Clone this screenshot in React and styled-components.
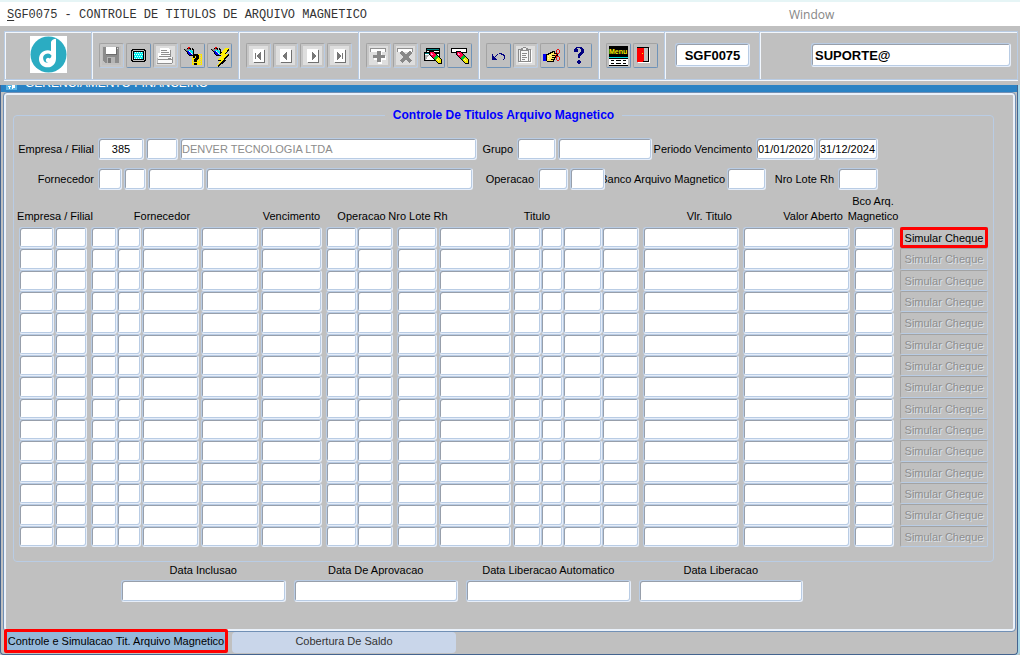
import styled, { createGlobalStyle, css } from "styled-components";

const GlobalStyle = createGlobalStyle`
  *{
    box-sizing: border-box;
  }
  body{
    margin: 0;
    background: #c0c0c0;
    font-family: "Liberation Sans", Arial, sans-serif;
    font-size: 11px;
    color: #000;
  }
  input, button{
    font-family: inherit;
    font-size: inherit;
  }
`;

const Screen = styled.div`
  min-height: 100vh;
  display: flex;
  flex-direction: column;
`;

const MenuBar = styled.header`
  height: 26px;
  flex: none;
  display: grid;
  grid-template-columns: 789fr 231fr;
  align-items: center;
  background: #fff;
  border-top: 2px solid #e6f5f6;
  padding-top: 2px;
`;

const ScreenTitle = styled.h1`
  margin: 0;
  padding-left: 7px;
  font: 12px "Liberation Mono", monospace;
  color: #333;
  u{
    text-underline-offset: 2px;
  }
`;

const MenuItem = styled.button`
  justify-self: start;
  padding: 0;
  border: 0;
  background: none;
  font-family: "Open Sans", sans-serif;
  font-size: 12px;
  line-height: 16px;
  color: #868686;
`;

const Toolbar = styled.div`
  display: flex;
  flex: none;
  height: 49px;
  margin: 5px 2px 5px 4px;
  border: 1px solid #b9cce4;
  box-shadow: inset 1px 1px #f2f7fd, 0 1px #f2f7fd;
`;

const ToolGroup = styled.div`
  display: flex;
  align-items: center;
  justify-content: ${({ $align }) => $align || "flex-start"};
  gap: 2px;
  padding: 0 6px 1px 7px;
  border-right: 1px solid #b9cce4;
  box-shadow: 1px 0 #f2f7fd;
  ${({ $width }) => $width && `width: ${$width}px;`}
  ${({ $grow }) =>
    $grow &&
    css`
      flex: 1;
      border-right: 0;
      box-shadow: none;
    `}
`;

const ToolButton = styled.button`
  width: 25px;
  height: 25px;
  padding: 0;
  border: 1px solid;
  border-color: #a3a3a3 #6f93b8 #6f93b8 #a3a3a3;
  border-radius: 2px;
  background: #c0c0c0;
  svg{
    display: block;
    shape-rendering: crispEdges;
  }
  &:disabled{
    border-color: #a3a3a3 #b9cce4 #b9cce4 #a3a3a3;
    background: ${({ $face }) => $face || "#c0c0c0"};
    box-shadow: inset 0 0 0 2px #c6c6c6;
  }
`;

const inset = css`
  border: 1px solid;
  border-color: #b9cce4 #e6eefa #e6eefa #b9cce4;
  border-radius: 3px;
  background: #fff;
  box-shadow: inset 1px 1px #979fab, inset -1px -1px #b9cce4;
`;

const ToolInput = styled.input`
  ${inset}
  width: ${({ $width }) => $width}px;
  height: 24px;
  padding: 0 3px;
  font-size: 13px;
  font-weight: bold;
  text-align: ${({ $align }) => $align || "left"};
`;

const WindowFrame = styled.div`
  flex: 1;
  display: flex;
  flex-direction: column;
  margin-right: 2px;
  padding-bottom: 1px;
  border: 1px solid #44648f;
  border-top: 0;
  border-radius: 0 0 4px 4px;
  box-shadow: 2px 0 #a5d5e6;
`;

const TitleBar = styled.div`
  flex: none;
  height: 7px;
  display: flex;
  align-items: flex-end;
  gap: 8px;
  padding-left: 5px;
  overflow: hidden;
  background: #2a82c4;
  color: #fff;
  font-size: 12px;
  line-height: 18px;
  svg{
    flex: none;
    margin-bottom: 2px;
  }
`;

const Panel = styled.main`
  flex: 1;
  display: flex;
  flex-direction: column;
  margin: 0 1px 0 2px;
  padding: 15px 19px 0 7px;
  border: 1px solid #7190b5;
  border-radius: 4px;
  box-shadow: inset 0 0 0 2px #eaf1fa;
`;

const Group = styled.fieldset`
  flex: 1;
  min-width: 0;
  margin: 0 2px;
  padding: 16px 5px 14px;
  border: 1px solid #b9cce4;
  border-radius: 4px;
`;

const Legend = styled.legend`
  margin: 0 auto;
  padding: 0 8px;
  font-weight: bold;
  font-size: 12px;
  line-height: 14px;
  color: #00f;
`;

const FieldRow = styled.div`
  display: flex;
  align-items: center;
  gap: 2px;
  height: 22px;
  margin-bottom: 8px;
  padding-right: 110px;
`;

const Label = styled.label`
  flex: none;
  display: flex;
  justify-content: flex-end;
  width: ${({ $width }) => $width}px;
  padding-right: ${({ $tight }) => ($tight ? 0 : 2)}px;
  white-space: nowrap;
`;

const Field = styled.input`
  ${inset}
  position: relative;
  flex: ${({ $width }) => ($width ? "none" : "1")};
  width: ${({ $width }) => ($width ? `${$width}px` : "auto")};
  min-width: 0;
  height: 22px;
  padding: 0 1px;
  text-align: ${({ $align }) => $align || "left"};
  color: ${({ readOnly }) => (readOnly ? "#8c8c8c" : "#000")};
`;

const Table = styled.table`
  display: block;
  thead{
    display: block;
  }
  tbody{
    display: grid;
    grid-auto-rows: 21px 22px 21px;
  }
  tr{
    display: grid;
    grid-template-columns: ${({ $columns }) => $columns};
  }
  td{
    display: flex;
    padding: 0;
  }
`;

const HeadCell = styled.th`
  grid-column: span ${({ colSpan }) => colSpan || 1};
  display: flex;
  align-items: flex-end;
  justify-content: ${({ $align }) => $align || "center"};
  height: 29px;
  padding: 0 ${({ $end }) => $end || 0}px 3px 0;
  font-weight: normal;
  line-height: 15px;
  white-space: nowrap;
`;

const Cell = styled.td`
  && {
    padding-right: ${({ $gap }) => $gap}px;
  }
`;

const CellInput = styled.input`
  ${inset}
  flex: 1;
  width: 100%;
  min-width: 0;
  padding: 0 2px;
`;

const RowButton = styled.button`
  flex: 1;
  padding: 0;
  border: 1px solid;
  border-color: #a3a3a3 #6f93b8 #6f93b8 #a3a3a3;
  border-radius: 2px;
  background: #c0c0c0;
  color: #000;
  white-space: nowrap;
  &:enabled{
    outline: 3px solid #f00;
    outline-offset: -3px;
  }
  &:disabled{
    border-color: #a3a3a3 #b9cce4 #b9cce4 #a3a3a3;
    color: #8e8e8e;
    text-shadow: 1px 1px #dde3ea;
  }
`;

const Dates = styled.div`
  flex: none;
  display: grid;
  grid-template-columns: repeat(4, minmax(0, 1fr));
  gap: 8px;
  padding: 0 193px 29px 110px;
`;

const DateField = styled.label`
  display: flex;
  flex-direction: column;
  gap: 2px;
  text-align: center;
  line-height: 16px;
  input{
    width: 100%;
    flex: none;
  }
`;

const Tabs = styled.nav`
  flex: none;
  display: flex;
  gap: 4px;
  height: 24px;
  margin: -3px 0 0 3px;
`;

const Tab = styled.button`
  width: 224px;
  padding: 0 0 ${({ $active }) => ($active ? 0 : 3)}px;
  margin-top: ${({ $active }) => ($active ? 0 : 3)}px;
  border: ${({ $active }) => ($active ? "3px solid #f00" : "0")};
  border-radius: ${({ $active }) => ($active ? 2 : 4)}px;
  background: ${({ $active }) => ($active ? "#94b8d9" : "#c9d6ea")};
  color: ${({ $active }) => ($active ? "#000" : "#333")};
  white-space: nowrap;
`;

// icons are drawn on the 23x23 face of a tool button
const Icon = ({ children }) => (
  <svg width="23" height="23" viewBox="1 1 23 23" aria-hidden="true">
    {children}
  </svg>
);

const Logo = () => (
  <svg width="38" height="38" viewBox="0 0 38 38" aria-hidden="true">
    <path fill="#fff" d="M0 0h37v37H0z" />
    <circle cx="18.5" cy="18.5" r="18" fill="#2bacc2" />
    <path
      fill="#fff"
      d="M21 6q1-3 5-3.200v19.600c0 5-3.500 8.800-8.300 8.800-5 0-8.700-3.600-8.700-8.300 0-5 3.700-8.700 8.700-8.700q1.800 0 3.300.8z"
    />
    <path
      fill="#2bacc2"
      d="M21.500 19.500a4.600 4.600 0 1 0-3.200 7.200q-3-1-2.400-3.300 1.200-2.500 3.900-1 1.700-1 1.700-2.900z"
    />
  </svg>
);

const SaveIcon = () => (
  <Icon>
    <path fill="#8c8c8c" d="M4 4h16v16H6l-2-2z" />
    <path fill="#fff" d="M7 4h10v7H7z" />
    <path fill="#6c6c6c" d="M17 4h1v8H7v-1h10z" />
    <path fill="#b4b4b4" d="M8 14h8v6H8z" />
    <path fill="#777" d="M9 15h3v5H9z" />
    <path fill="#ddd" d="M18 5h1v1h-1z" />
  </Icon>
);

const MonitorIcon = () => (
  <Icon>
    <path d="M6 6h13v1h1v11h-1v1H6v-1H5V7h1z" />
    <path fill="#c0c0c0" d="M7 7h11v1h1v9h-1v1H7v-1H6V8h1z" />
    <path d="M7 8h11v9H7z" />
    <path fill="#00f0f0" d="M8 9h9v7H8z" />
    <path
      fill="#e8ffff"
      d="M9 9h1v1H9zM11 9h1v1h-1zM13 9h1v1h-1zM15 9h1v1h-1zM8 11h1v1H8zM10 11h1v1h-1zM12 11h1v1h-1zM14 11h1v1h-1zM16 11h1v1h-1zM9 13h1v1H9zM11 13h1v1h-1zM13 13h1v1h-1zM15 13h1v1h-1zM8 15h1v1H8zM10 15h1v1h-1zM12 15h1v1h-1zM14 15h1v1h-1z"
    />
  </Icon>
);

const PrintIcon = () => (
  <Icon>
    <path fill="#fff" d="M7 5h8l2 2v7H5v-4h2z" />
    <path fill="#909090" d="M8 7h6v1H8zM8 9h8v1H8zM8 11h9v1H8zM17 7h1v6h-1zM6 13h12v1H6z" />
    <path fill="#fafafa" d="M5 14h14v6H5z" />
    <path fill="#909090" d="M19 14h1v6h-1zM5 16h14v1H5zM15 15h3v1h-3zM4 20h15v1H4z" />
    <path fill="#bbb" d="M4 15h1v5H4z" />
  </Icon>
);

const Torch = () => (
  <>
    <path d="M4 6h1v1H4zM5 7h1v1H5zM6 8h1v1H6zM7 9h1v2H7zM8 11h1v1H8zM9 12h2v1H9zM7 5h1v1H7zM9 5h2v1H9zM10 6h1v1h-1zM12 5h1v2h-1zM13 6h1v7h-1zM11 12h2v1h-2z" />
    <path fill="#888" d="M5 6h5v1H5zM6 7h2v1H6z" />
    <path fill="#f00000" d="M8 4h2v1H8zM8 5h1v1H8z" />
    <path fill="#0000e8" d="M7 8h2v1h1v1h1v1h1v1H9v-1H8V9H7z" />
    <path fill="#00e8f0" d="M8 7h4v1h1v3h-1v-1h-1V9H9V8H8z" />
    <path fill="#fff" d="M9 8h1v1H9zM11 10h1v1h-1z" />
  </>
);

const QueryIcon = () => (
  <Icon>
    <Torch />
    <path fill="#ffe800" d="M14 11h8v11H12v-8h2z" />
    <path
      fill="#c0c0c0"
      d="M20 12h1v1h-1zM20 14h1v1h-1zM20 16h1v1h-1zM20 18h1v1h-1zM20 20h1v1h-1zM18 17h1v1h-1zM13 19h1v1h-1zM13 17h1v1h-1z"
    />
    <path d="M13 12h1v-1h4v1h1v4h-1v1h-1v2h-3v-3h1v-1h1v-2h-1v2h-2zM14 20h3v2h-3z" />
  </Icon>
);

const ExecuteIcon = () => (
  <Icon>
    <Torch />
    <path d="M18 5h4v2l-3 4h3v1l-5 5h2v1l-8 6v-2l3-4h-3v-1l4-5h-2v-1z" />
    <path fill="#ffee00" d="M18 5h4l-4 6h3l-5 5h2l-8 7 4-6h-3l4-5h-2z" />
  </Icon>
);

const NavIcon = ({ children }) => (
  <Icon>
    <path fill="#fff" d="M7 6h11v13H7z" />
    <path fill="#707070" d="M18 7h1v13H8v-1h10z" />
    <g fill="#777">{children}</g>
  </Icon>
);

const InsertIcon = () => (
  <Icon>
    <path fill="#909090" d="M4 5h16v4H4z" />
    <path fill="#fff" d="M5 6h14v3H5z" />
    <path fill="#fff" d="M12 9h4v4h4v4h-4v4h-4v-4H8v-4h4z" />
    <path fill="#888" d="M11 8h4v4h4v3h-4v4h-4v-4H7v-3h4z" />
  </Icon>
);

const RemoveIcon = () => (
  <Icon>
    <path fill="#909090" d="M4 5h16v4H4z" />
    <path fill="#fff" d="M5 6h14v3H5z" />
    <path stroke="#888" strokeWidth="3" d="M8 9l10 10M18 9L8 19" />
  </Icon>
);

const Pencil = () => (
  <>
    <path d="M9 8h4l9 9v4h-4l-9-9z" />
    <path fill="#ff0048" d="M10 9h3l3 3-3 3-3-3z" />
    <path fill="#ff9ad0" d="M11 10h1v1h1v1h-2z" />
    <path fill="#00c030" d="M16 12l2 2-3 3-2-2z" />
    <path fill="#f0e800" d="M18 14l3 3v3h-3l-3-3z" />
    <path fill="#fff890" d="M17 16h1v1h1v1h-1v-1h-1z" />
  </>
);

const ClearFormIcon = () => (
  <Icon>
    <path d="M6 5h14v13H4V9h2z" />
    <path fill="#008080" d="M7 6h12v1H7zM5 10h10v1H5z" />
    <path fill="#fff" d="M7 8h12v1H7zM5 11h14v6H5z" />
    <path fill="#b0b0b0" d="M5 12h4l-3 5H5z" />
    <Pencil />
  </Icon>
);

const ClearRecordIcon = () => (
  <Icon>
    <path d="M4 5h16v5H4z" />
    <path fill="#fff" d="M5 6h14v3H5z" />
    <Pencil />
  </Icon>
);

const UndoIcon = () => (
  <Icon>
    <path
      fill="#000080"
      d="M6 11h1v2h1v1h1v-1h1v-1h1v-1h2v-1h3v1h2v1h1v4h-1v1h-1v-1h1v-3h-1v-1h-2v-1h-3v1h-1v1h-1v1h-1v1h1v1h1v1H6z"
    />
  </Icon>
);

const ClipboardIcon = () => (
  <Icon>
    <path fill="#fff" d="M6 7h13v13H6z" />
    <path fill="#8a8a8a" d="M5 6h3V5h2V4h3v1h2v1h3v13H5z" />
    <path fill="#eee" d="M6 7h1v11H6zM16 7h1v11h-1zM10 5h3v2h-3z" />
    <path fill="#f8f8f8" d="M8 8h7v10H8z" />
    <path fill="#8a8a8a" d="M9 10h5v1H9zM9 12h4v1H9zM9 14h5v1H9zM9 16h3v1H9z" />
  </Icon>
);

const HandIcon = () => (
  <Icon>
    <path d="M6 11h2v-1h2V9h2V8h3v2h3v3h-2v2h-1v2h-1v2H7v-1H6z" />
    <path fill="#0000f0" d="M3 11h3v7H3z" />
    <path
      fill="#ffe860"
      d="M7 12h2v-1h2v-1h2V9h1v2h3v1h-5v1h3v1h-3v1h2v1h-3v1h2v1H7z"
    />
    <path fill="#fff8c0" d="M8 13h1v1H8zM10 12h1v1h-1zM8 15h1v1H8z" />
    <path
      fill="#e81010"
      d="M17 6h2v1h-2zM16 7h1v3h-1zM19 7h1v3h-1zM17 10h2v1h-2zM16 11h1v1h-1zM15 12h1v1h-1zM16 13h1v1h-1zM17 13h2v1h-2zM16 14h1v3h-1zM19 14h1v3h-1zM17 17h2v1h-2z"
    />
  </Icon>
);

const HelpIcon = () => (
  <Icon>
    <path
      fill="#000080"
      d="M8 5h1V4h6v1h1v1h1v4h-1v1h-1v1h-1v1h-1v2h-2v-4h1v-1h1V9h1V6h-1V5h-3v1h1v3H7V6h1zM11 17h2v1h1v2h-1v1h-2v-1h-1v-2h1z"
    />
  </Icon>
);

const MenuIcon = () => (
  <Icon>
    <path d="M3 3h19v20H3z" />
    <text
      x="3"
      y="11"
      fill="#f8f000"
      fontFamily="Liberation Sans"
      fontWeight="bold"
      fontSize="7"
    >
      Menu
    </text>
    <path fill="#00e0e0" d="M3 14h19v1H3z" />
    <path fill="#fff" d="M3 16h19v6H3z" />
    <path d="M5 17h3v1H5zM10 17h5v1h-5zM17 17h3v1h-3zM5 20h3v1H5zM10 20h5v1h-5zM17 20h3v1h-3z" />
  </Icon>
);

const ExitIcon = () => (
  <Icon>
    <path d="M4 4h12v15H4z" />
    <path fill="#fff" d="M5 19h12v1H5zM16 5h1v15h-1z" />
    <path fill="#c0c0c0" d="M11 5h4v13h-4z" />
    <path fill="#f00" d="M4 5h7v12l-2 2H4z" />
    <path fill="#ffe800" d="M9 10h1v1H9z" />
  </Icon>
);

const toolGroups = [
  [
    { name: "Salvar", icon: <SaveIcon />, disabled: true },
    { name: "Tela", icon: <MonitorIcon /> },
    { name: "Imprimir", icon: <PrintIcon />, disabled: true, face: "#dedede" },
    { name: "Entrar consulta", icon: <QueryIcon /> },
    { name: "Executar consulta", icon: <ExecuteIcon /> },
  ],
  [
    {
      name: "Primeiro",
      icon: <NavIcon><path d="M9 10h1v6H9zM15 9v8h-1v-1h-1v-1h-1v-1h-1v-2h1v-1h1v-1h1V9z" /></NavIcon>,
      disabled: true,
      face: "#dedede",
    },
    {
      name: "Anterior",
      icon: <NavIcon><path d="M14 9v8h-1v-1h-1v-1h-1v-1h-1v-2h1v-1h1v-1h1V9z" /></NavIcon>,
      disabled: true,
      face: "#dedede",
    },
    {
      name: "Proximo",
      icon: <NavIcon><path d="M12 9v8h1v-1h1v-1h1v-1h1v-2h-1v-1h-1v-1h-1V9z" /></NavIcon>,
      disabled: true,
      face: "#dedede",
    },
    {
      name: "Ultimo",
      icon: <NavIcon><path d="M10 9v8h1v-1h1v-1h1v-1h1v-2h-1v-1h-1v-1h-1V9zM15 10h1v6h-1z" /></NavIcon>,
      disabled: true,
      face: "#dedede",
    },
  ],
  [
    { name: "Inserir registro", icon: <InsertIcon />, disabled: true, face: "#dedede" },
    { name: "Remover registro", icon: <RemoveIcon />, disabled: true, face: "#dedede" },
    { name: "Limpar tela", icon: <ClearFormIcon /> },
    { name: "Limpar registro", icon: <ClearRecordIcon /> },
  ],
  [
    { name: "Desfazer", icon: <UndoIcon /> },
    { name: "Colar", icon: <ClipboardIcon />, disabled: true, face: "#dedede" },
    { name: "Lista de valores", icon: <HandIcon /> },
    { name: "Ajuda", icon: <HelpIcon /> },
  ],
  [
    { name: "Menu", icon: <MenuIcon /> },
    { name: "Sair", icon: <ExitIcon /> },
  ],
];

// share is the column's part of the row, gap the space kept at its right
const columns = [
  { name: "Empresa", share: 36, gap: 1 },
  { name: "Filial", share: 36, gap: 4 },
  { name: "Fornecedor empresa", share: 26, gap: 0 },
  { name: "Fornecedor tipo", share: 25, gap: 1 },
  { name: "Fornecedor codigo", share: 59, gap: 2 },
  { name: "Fornecedor nome", share: 60, gap: 2 },
  { name: "Vencimento", share: 65, gap: 4 },
  { name: "Operacao", share: 31, gap: 0 },
  { name: "Operacao descricao", share: 40, gap: 4 },
  { name: "Nro Lote Rh", share: 42, gap: 2 },
  { name: "Descricao", share: 74, gap: 2 },
  { name: "Titulo empresa", share: 28, gap: 0 },
  { name: "Titulo filial", share: 22, gap: 0 },
  { name: "Titulo numero", share: 39, gap: 0 },
  { name: "Titulo parcela", share: 41, gap: 4 },
  { name: "Vlr. Titulo", share: 100, gap: 4 },
  { name: "Valor Aberto", share: 111, gap: 4 },
  { name: "Bco Arq. Magnetico", share: 46, gap: 6 },
];

const template = `${columns.map((c) => `minmax(0, ${c.share}fr)`).join(" ")} minmax(0, 88fr)`;

const rows = Array.from({ length: 15 }, (_, i) => i + 1);

const dateFields = [
  "Data Inclusao",
  "Data De Aprovacao",
  "Data Liberacao Automatico",
  "Data Liberacao",
];

const Filters = () => (
  <>
    <FieldRow>
      <Label htmlFor="empresa" $width={77}>Empresa / Filial</Label>
      <Field id="empresa" $width={46} $align="center" defaultValue="385" />
      <Field aria-label="Filial" $width={32} />
      <Field aria-label="Nome da empresa" readOnly value="DENVER TECNOLOGIA LTDA" />
      <Label htmlFor="grupo" $width={36}>Grupo</Label>
      <Field id="grupo" $width={39} />
      <Field aria-label="Nome do grupo" $width={94} />
      <Label htmlFor="periodo" $width={100}>Periodo Vencimento</Label>
      <Field id="periodo" $width={60} defaultValue="01/01/2020" />
      <Field aria-label="Fim do periodo" $width={60} defaultValue="31/12/2024" />
    </FieldRow>
    <FieldRow>
      <Label htmlFor="fornecedor" $width={77}>Fornecedor</Label>
      <Field id="fornecedor" $width={24} />
      <Field aria-label="Tipo de fornecedor" $width={22} />
      <Field aria-label="Codigo do fornecedor" $width={56} />
      <Field aria-label="Nome do fornecedor" />
      <Label htmlFor="operacao" $width={61}>Operacao</Label>
      <Field id="operacao" $width={30} />
      <Field aria-label="Nome da operacao" $width={35} />
      <Label htmlFor="banco" $width={118} $tight>Banco Arquivo Magnetico</Label>
      <Field id="banco" $width={39} />
      <Label htmlFor="lote" $width={68}>Nro Lote Rh</Label>
      <Field id="lote" $width={40} />
    </FieldRow>
  </>
);

const TitulosTable = () => (
  <Table $columns={template}>
    <thead>
      <tr>
        <HeadCell colSpan={2}>Empresa / Filial</HeadCell>
        <HeadCell colSpan={4} $end={28}>Fornecedor</HeadCell>
        <HeadCell $end={4}>Vencimento</HeadCell>
        <HeadCell colSpan={2}>Operacao</HeadCell>
        <HeadCell>Nro Lote Rh</HeadCell>
        <HeadCell colSpan={5} $end={8}>Titulo</HeadCell>
        <HeadCell $align="flex-end" $end={11}>Vlr. Titulo</HeadCell>
        <HeadCell $align="flex-end" $end={11}>Valor Aberto</HeadCell>
        <HeadCell $end={8}>
          Bco Arq.
          <br />
          Magnetico
        </HeadCell>
        <td />
      </tr>
    </thead>
    <tbody>
      {rows.map((row) => (
        <tr key={row}>
          {columns.map((column) => (
            <Cell key={column.name} $gap={column.gap}>
              <CellInput aria-label={`${column.name} ${row}`} />
            </Cell>
          ))}
          <td>
            <RowButton disabled={row > 1}>Simular Cheque</RowButton>
          </td>
        </tr>
      ))}
    </tbody>
  </Table>
);

const App = () => {
  return (
    <Screen>
      <GlobalStyle />
      <MenuBar>
        <ScreenTitle>
          <u>S</u>GF0075 - CONTROLE DE TITULOS DE ARQUIVO MAGNETICO
        </ScreenTitle>
        <MenuItem>Window</MenuItem>
      </MenuBar>
      <Toolbar>
        <ToolGroup $width={87} $align="center">
          <Logo />
        </ToolGroup>
        {toolGroups.map((group, index) => (
          <ToolGroup key={index}>
            {group.map((tool) => (
              <ToolButton
                key={tool.name}
                aria-label={tool.name}
                disabled={tool.disabled}
                $face={tool.face}
              >
                {tool.icon}
              </ToolButton>
            ))}
          </ToolGroup>
        ))}
        <ToolGroup $width={95} $align="center">
          <ToolInput aria-label="Programa" $width={75} $align="center" defaultValue="SGF0075" />
        </ToolGroup>
        <ToolGroup $grow $align="flex-end">
          <ToolInput aria-label="Usuario" $width={200} defaultValue="SUPORTE@" />
        </ToolGroup>
      </Toolbar>
      <WindowFrame>
        <TitleBar>
          <svg width="11" height="11" viewBox="0 0 11 11" aria-hidden="true">
            <path fill="#58b4e4" d="M0 0h11v11H0z" />
            <path fill="#fff" d="M2 7h3v1H4v2H3V8H2zM6 6h3v3H7v1H6z" />
          </svg>
          GERENCIAMENTO FINANCEIRO
        </TitleBar>
        <Panel>
          <Group>
            <Legend>Controle De Titulos Arquivo Magnetico</Legend>
            <Filters />
            <TitulosTable />
          </Group>
          <Dates>
            {dateFields.map((name) => (
              <DateField key={name}>
                {name}
                <Field />
              </DateField>
            ))}
          </Dates>
        </Panel>
        <Tabs>
          <Tab $active>Controle e Simulacao Tit. Arquivo Magnetico</Tab>
          <Tab>Cobertura De Saldo</Tab>
        </Tabs>
      </WindowFrame>
    </Screen>
  );
};

export default App;
